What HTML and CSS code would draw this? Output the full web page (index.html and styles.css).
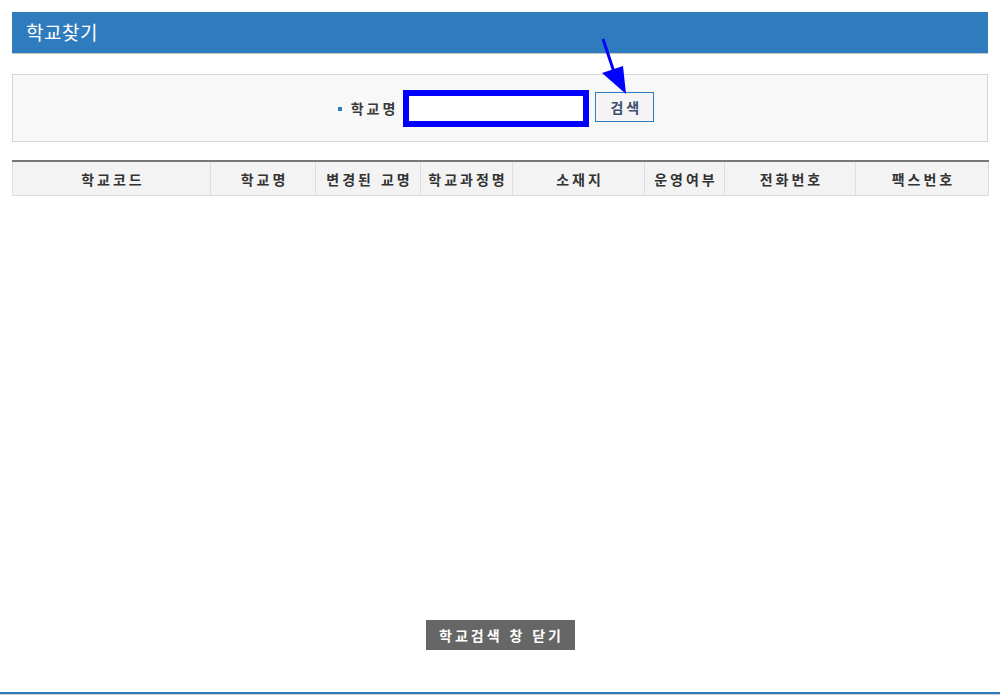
FILE: index.html
```html
<!DOCTYPE html>
<html lang="ko">
<head>
  <meta charset="UTF-8">
  <title>학교찾기</title>
  <link rel="stylesheet" href="styles.css">
</head>
<body>
  <div class="wrap">
    <h1 class="title">학교찾기</h1>

    <div class="search-box">
      <span class="bullet"></span>
      <label class="search-label" for="schoolName">학교명</label>
      <input type="text" id="schoolName" class="search-input">
      <button class="search-btn">검색</button>
    </div>

    <table class="result">
      <colgroup>
        <col style="width: 198px">
        <col style="width: 105px">
        <col style="width: 105px">
        <col style="width: 92px">
        <col style="width: 132px">
        <col style="width: 80px">
        <col style="width: 131px">
        <col style="width: 133px">
      </colgroup>
      <thead>
        <tr>
          <th>학교코드</th>
          <th>학교명</th>
          <th>변경된 교명</th>
          <th>학교과정명</th>
          <th>소재지</th>
          <th>운영여부</th>
          <th>전화번호</th>
          <th>팩스번호</th>
        </tr>
      </thead>
      <tbody></tbody>
    </table>

    <div class="actions">
      <button class="close-btn">학교검색 창 닫기</button>
    </div>
  </div>

  <div class="bottom-line"></div>

  <!-- annotation arrow pointing at the search button -->
  <svg class="pointer" width="1000" height="140" viewBox="0 0 1000 140">
    <line x1="603" y1="39" x2="614" y2="72" stroke="#0000ff" stroke-width="3"/>
    <polygon points="602,73 623,66 626,94" fill="#0000ff"/>
  </svg>
</body>
</html>
```

FILE: styles.css
```css
/* page */
body {
  margin: 0;
  font-family: "Noto Sans CJK KR", "Noto Sans", sans-serif;
  background: #ffffff;
  color: #333;
}

.wrap {
  padding: 12px 12px 0;
}

/* title bar */
.title {
  margin: 0;
  height: 41px;
  line-height: 40px;
  padding-left: 14px;
  background: #2e7bbe;
  border-bottom: 1px solid #c6c6c6;
  color: #fff;
  font-size: 19px;
  font-weight: normal;
  letter-spacing: 0.5px;
}

/* search area */
.search-box {
  margin-top: 20px;
  height: 66px;
  padding-right: 8px;
  border: 1px solid #d6d6d6;
  background: #f8f8f8;
  display: flex;
  align-items: center;
  justify-content: center;
}

.bullet {
  width: 4px;
  height: 4px;
  background: #2e7bbe;
  margin-right: 9px;
  margin-top: 1px;
}

.search-label {
  font-size: 14px;
  font-weight: bold;
  letter-spacing: 3px;
  color: #3a3a3a;
  margin-right: 5px;
}

.search-input {
  box-sizing: border-box;
  width: 186px;
  height: 37px;
  border: 6px solid #0000ff;
  background: #fff;
  margin: 0 6px 0 0;
  padding: 0 4px;
  outline: none;
}

.search-btn {
  box-sizing: border-box;
  width: 59px;
  height: 30px;
  border: 1px solid #2e7bbe;
  background: #f4f4f4;
  color: #3d4f70;
  font-family: inherit;
  font-size: 14px;
  font-weight: bold;
  letter-spacing: 3px;
  padding: 0 0 0 3px;
  margin-top: -2px;
  cursor: pointer;
}

/* result table */
.result {
  margin-top: 18px;
  width: 976px;
  border-collapse: collapse;
  table-layout: fixed;
  border-top: 2px solid #777;
}

.result th {
  height: 33px;
  padding: 0 0 0 3px;
  background: #f3f3f3;
  border: 1px solid #dddddd;
  border-top: none;
  font-size: 14px;
  font-weight: bold;
  letter-spacing: 3px;
  color: #333;
  white-space: nowrap;
  overflow: hidden;
}

/* close button */
.actions {
  margin-top: 424px;
  text-align: center;
  height: 30px;
}

.close-btn {
  width: 149px;
  height: 30px;
  border: none;
  background: #666;
  color: #fff;
  font-family: inherit;
  font-size: 14px;
  font-weight: bold;
  letter-spacing: 3px;
  padding: 0 0 0 3px;
  cursor: pointer;
}

.bottom-line {
  margin-top: 42px;
  border-top: 2px solid #2e7bbe;
  border-bottom: 1px solid #cfcfcf;
}

.pointer {
  position: absolute;
  left: 0;
  top: 0;
  pointer-events: none;
}
```
